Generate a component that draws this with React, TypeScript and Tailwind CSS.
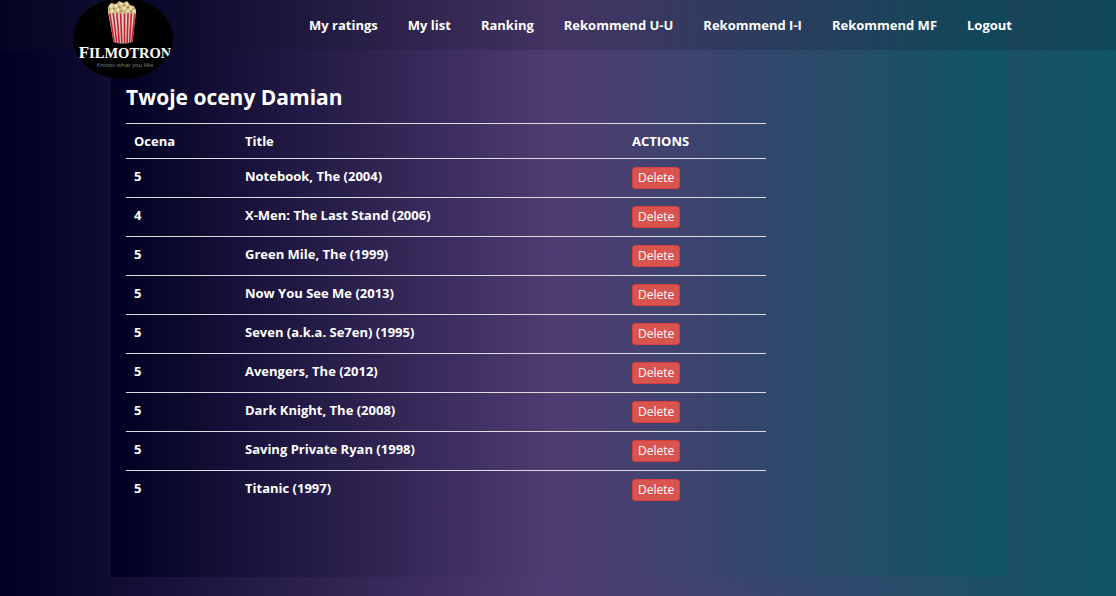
const links = ["My ratings", "My list", "Ranking", "Rekommend U-U", "Rekommend I-I", "Rekommend MF", "Logout"];

const ratings = [
  { score: 5, title: "Notebook, The (2004)" },
  { score: 4, title: "X-Men: The Last Stand (2006)" },
  { score: 5, title: "Green Mile, The (1999)" },
  { score: 5, title: "Now You See Me (2013)" },
  { score: 5, title: "Seven (a.k.a. Se7en) (1995)" },
  { score: 5, title: "Avengers, The (2012)" },
  { score: 5, title: "Dark Knight, The (2008)" },
  { score: 5, title: "Saving Private Ryan (1998)" },
  { score: 5, title: "Titanic (1997)" },
];

function Logo() {
  return (
    <svg viewBox="0 0 100 81" className="h-[81px] w-[100px]" role="img" aria-label="Filmotron">
      <defs>
        <clipPath id="logo-oval">
          <ellipse cx="50" cy="40.5" rx="50" ry="40.5" />
        </clipPath>
      </defs>
      <ellipse cx="50" cy="40.5" rx="50" ry="40.5" fill="#000" />
      <path d="M35 14 L63 14 L59.5 44 Q50 47 40.5 44 Z" fill="#e3cbc3" />
      <path
        d="M36.5 14 L41.3 44M40 14 L43.8 45M43.8 14 L46.3 45M47.5 14 L48.8 45.5M51.5 14 L51.5 45.5M55.1 14 L54.1 45M58.5 14 L56.5 45M62 14 L58.8 44"
        stroke="#c0242f"
        strokeWidth="1.6"
      />
      <path d="M35 16 L35 9 L38 5 L43 6 L46 3 L50 5 L54 3 L57 7 L61 8 L63 12 L63 16 Q56 14 50 16 Q42 14 35 16Z" fill="#cdb980" />
      <g fill="#efe2b4">
        <circle cx="38" cy="8" r="1.8" /><circle cx="43" cy="8" r="1.7" /><circle cx="48" cy="6" r="1.8" />
        <circle cx="54" cy="6" r="1.7" /><circle cx="58" cy="10" r="1.7" /><circle cx="51" cy="10" r="1.8" />
        <circle cx="45" cy="12" r="1.6" /><circle cx="39" cy="13" r="1.7" /><circle cx="61" cy="13" r="1.6" /><circle cx="55" cy="13" r="1.5" />
      </g>
      <g fill="#7d6a3a">
        <circle cx="41" cy="10.5" r=".8" /><circle cx="46" cy="9" r=".8" /><circle cx="51" cy="7.5" r=".8" />
        <circle cx="55" cy="9.5" r=".8" /><circle cx="48" cy="13" r=".8" /><circle cx="58" cy="13.5" r=".8" />
        <circle cx="36.5" cy="11.5" r=".7" /><circle cx="60" cy="11" r=".7" />
      </g>
      <g clipPath="url(#logo-oval)" fill="#fff" textAnchor="middle">
        <text x="52" y="60" fontFamily="'Liberation Serif', serif" fontWeight="700" fontSize="14.5">
          <tspan fontSize="17">F</tspan>ILMOTRON
        </text>
        <text x="52" y="69" fontFamily="'Open Sans', sans-serif" fontSize="6" fill="#858585">Knows what you like</text>
      </g>
    </svg>
  );
}

export default function App() {
  return (
    <div className="relative min-h-screen bg-[linear-gradient(to_right,#000022,#503c72_50%,#0f5565)] font-['Open_Sans',sans-serif] text-[13px] leading-[18px] text-white">
      <header className="absolute inset-x-0 top-0 z-10 h-[50px] bg-[#141428]/20">
        <div className="mx-auto flex max-w-[970px] items-start justify-between">
          <a href="#" className="-mt-[2px] shrink-0">
            <Logo />
          </a>
          <nav className="flex pr-4">
            {links.map((label) => (
              <a key={label} href="#" className="px-[15px] py-4 font-bold whitespace-nowrap">
                {label}
              </a>
            ))}
          </nav>
        </div>
      </header>
      <main className="mx-auto min-h-[577px] max-w-[894px] bg-[linear-gradient(to_right,#000022,#503c72_50%,#0f5565)] px-[15px] pt-[84px]">
        <h1 className="text-[21px] leading-[27px] font-bold">Twoje oceny Damian</h1>
        <table className="mt-3 w-full max-w-[640px] table-fixed border-separate border-spacing-0 text-left font-bold">
          <colgroup>
            <col className="w-[111px]" />
            <col />
            <col className="w-[142px]" />
          </colgroup>
          <thead>
            <tr>
              {["Ocena", "Title", "ACTIONS"].map((name) => (
                <th key={name} scope="col" className="border-t border-[#dddddd] p-2">
                  {name}
                </th>
              ))}
            </tr>
          </thead>
          <tbody>
            {ratings.map(({ score, title }) => (
              <tr key={title} className="align-top">
                <td className="border-t border-[#dddddd] p-2">{score}</td>
                <td className="border-t border-[#dddddd] p-2">{title}</td>
                <td className="border-t border-[#dddddd] p-2">
                  <button
                    type="button"
                    aria-label={`Delete ${title}`}
                    className="block rounded-[3px] border border-[#d43f3a] bg-[#d9534f] px-[5px] py-px text-[12px] leading-[18px] font-normal"
                  >
                    Delete
                  </button>
                </td>
              </tr>
            ))}
          </tbody>
        </table>
      </main>
    </div>
  );
}
